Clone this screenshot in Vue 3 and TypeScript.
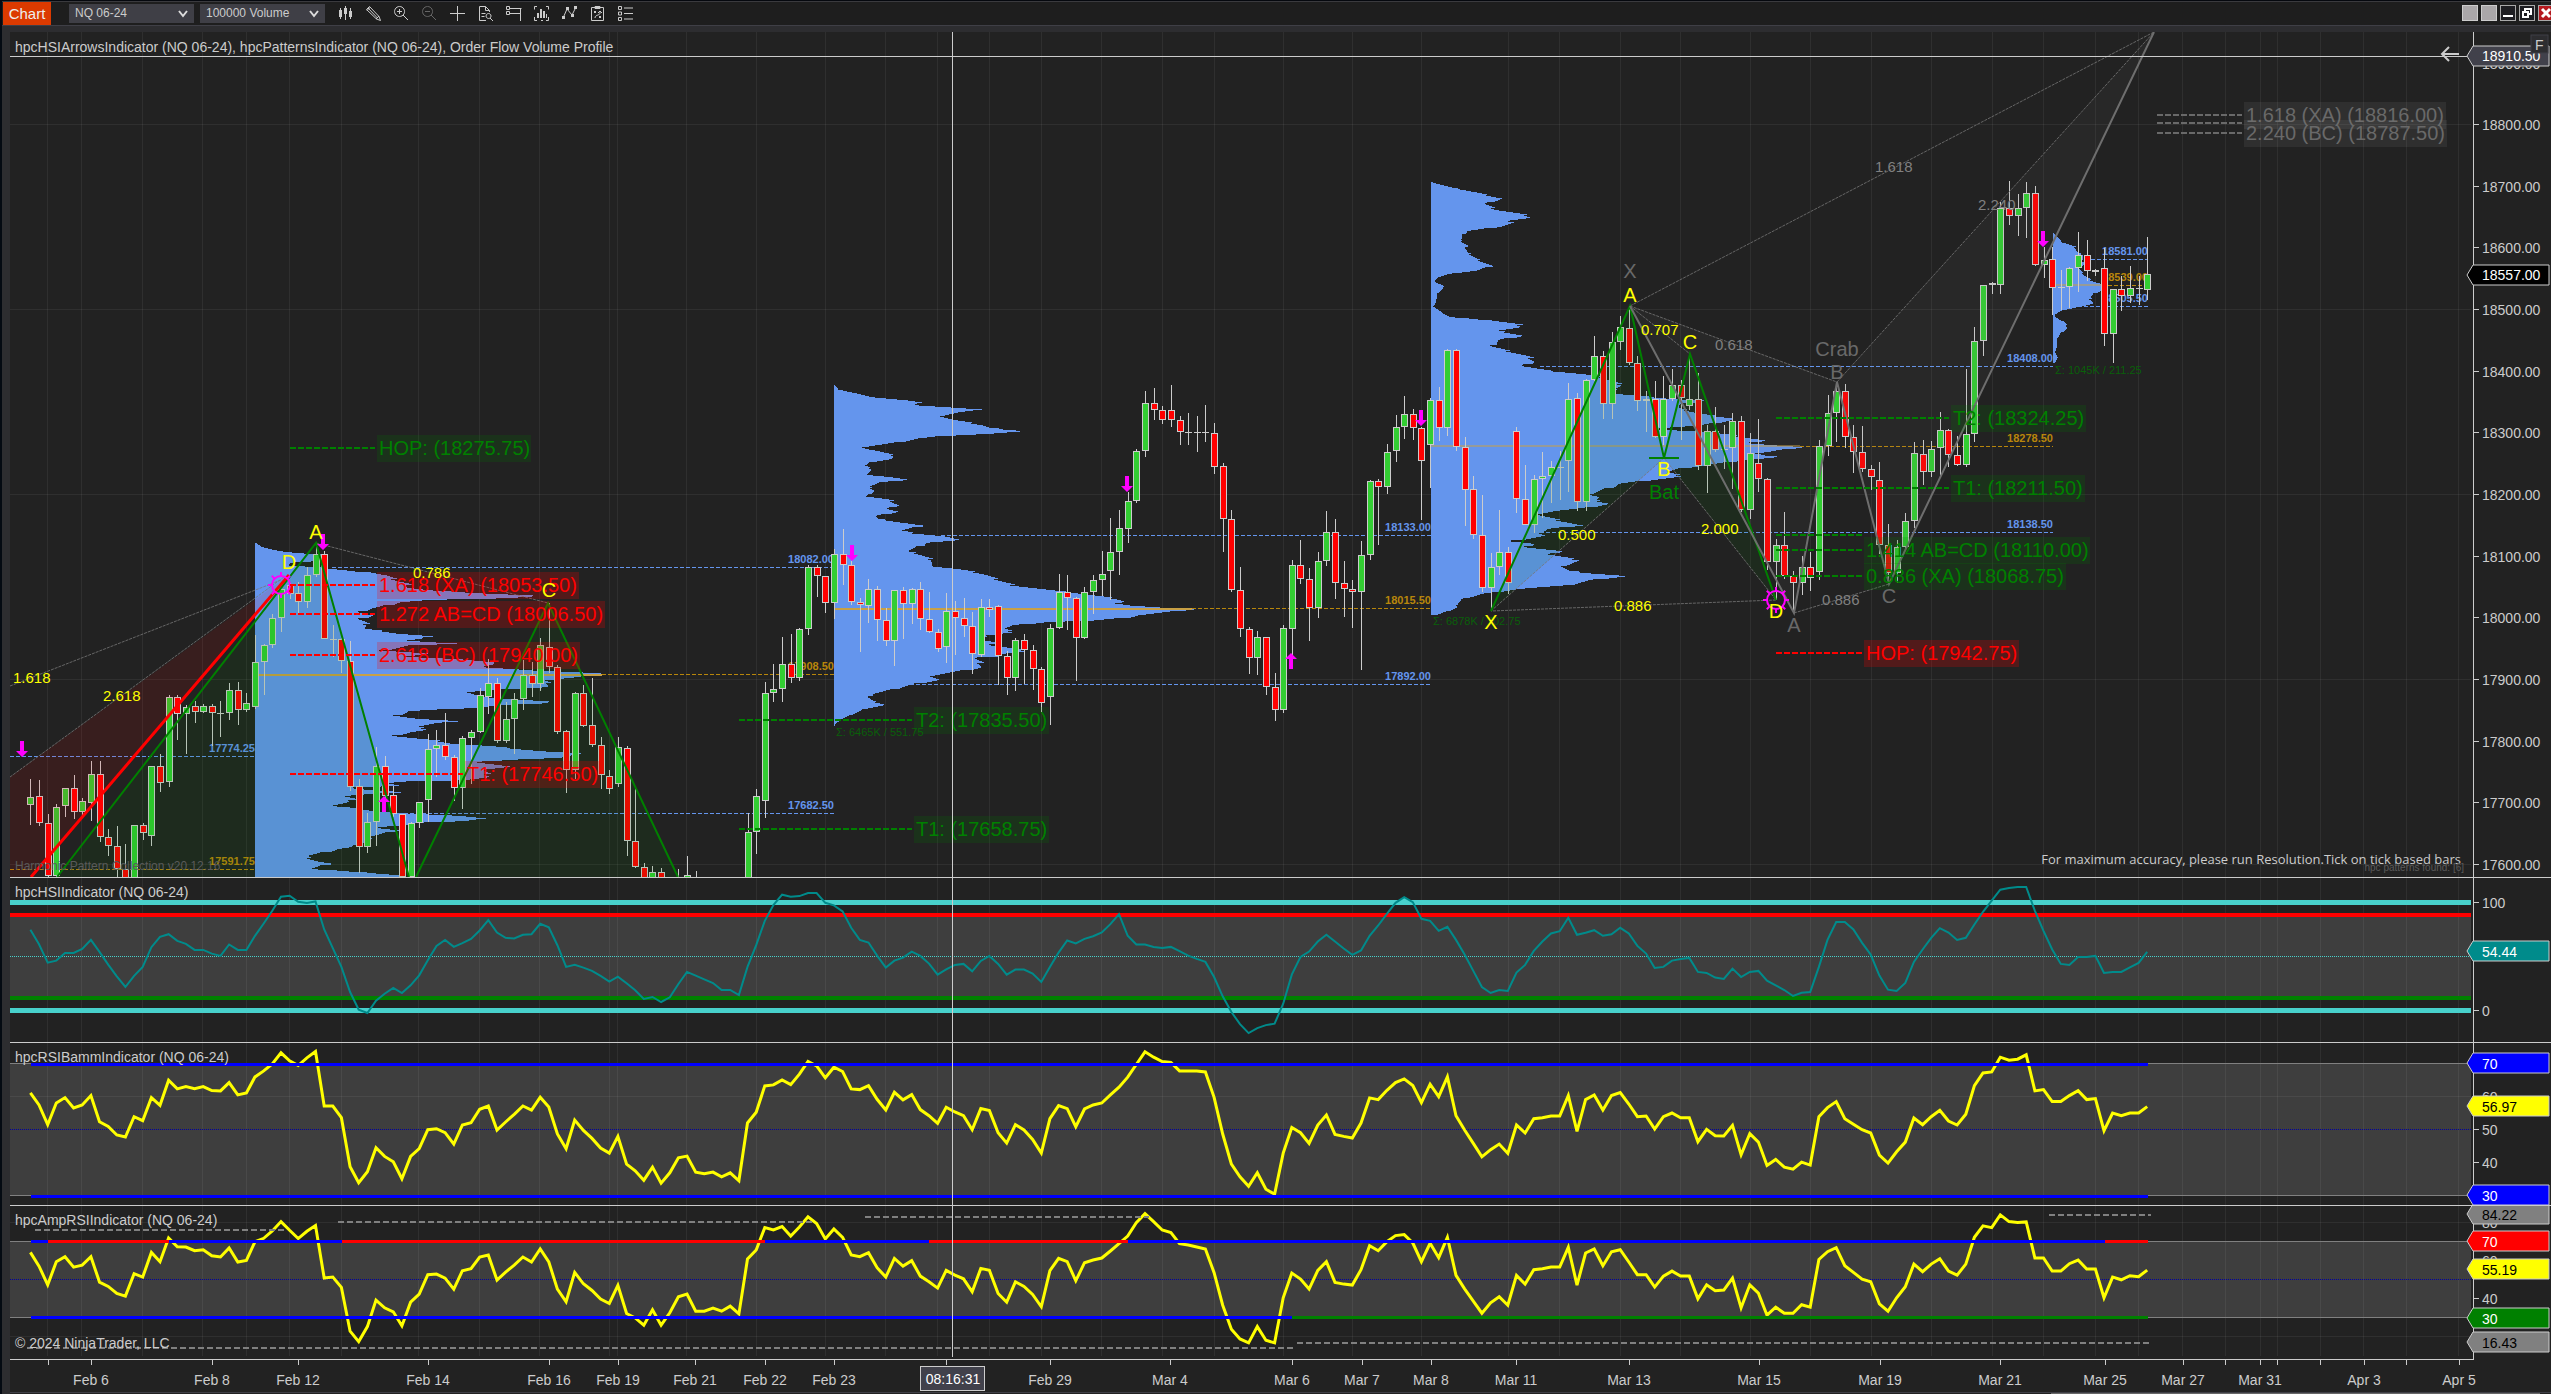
<script setup lang="ts">
type Pt = [number, number]

/* ---------- bar series ---------- */
const FIRST_X = 30.4
const BAR_STEP = 8.64
const barX = (i: number) => FIRST_X + i * BAR_STEP

// Each row: body top, body bottom, high, low (thirds of a unit below the block origin), direction.
const barBlocks: { origin: number; rows: string }[] = [
  {
    origin: 500,
    rows: `892 916 838 974 g,889 970 840 977 r,970 1127 942 1131 r,920 1127 912 1131 g,863 919 863 950 g,863 935 826 956 r,904 935 895 948 g,823 910 784 963 g,823 1012 784 1026 r,1012 1039 988 1068 r,
1039 1107 979 1131 r,1107 1140 1033 1140 r,976 1140 976 1140 g,976 1000 969 1019 r,799 1009 799 1037 g,799 850 763 876 r,592 847 586 860 g,592 643 585 719 r,622 643 616 761 g,619 635 604 668 r,
619 635 613 638 g,619 640 611 739 r,640 640 604 710 g,571 640 549 660 g,571 631 547 674 r,610 631 580 635 g,487 622 405 627 g,436 487 433 585 g,355 436 343 443 g,268 355 262 395 g,
256 283 248 298 r,280 307 247 346 r,226 307 200 325 g,163 226 136 230 g,163 418 152 418 r,416 416 376 472 g,416 484 413 518 r,484 862 424 872 r,859 1042 838 1118 r,967 1040 940 1058 g,
797 967 741 1037 g,797 889 768 893 r,886 943 859 951 r,943 1130 943 1135 r,970 1130 967 1135 g,907 970 907 983 g,748 901 703 966 g,736 748 690 830 g,736 772 640 780 r,772 865 765 902 r`,
  },
  {
    origin: 520,
    rows: `655 805 648 867 g,637 653 630 792 g,526 637 504 640 g,490 532 418 582 g,490 664 474 668 r,598 664 547 668 g,538 598 520 702 g,466 538 420 570 g,466 493 427 530 r,376 493 354 513 g,
382 442 250 459 r,442 637 436 641 r,634 751 630 818 r,520 751 517 777 g,520 619 495 620 r,616 676 474 681 r,676 766 652 807 r,769 808 750 822 r,682 793 651 800 g,685 964 678 1008 r,
964 1042 804 1045 r,1042 1080 1030 1080 r,1056 1080 1038 1080 g,1056 1080 1045 1080 r,1090 1120 1085 1125 r,1080 1120 1047 1125 r,1066 1120 1008 1125 g,1080 1120 1052 1125 r,1090 1120 1085 1125 r,1090 1120 1085 1125 g,
1090 1120 1085 1125 r,1090 1120 1085 1125 g,1090 1120 1085 1125 r,937 1080 880 1080 g,829 937 807 1002 g,520 844 486 894 g,508 520 432 546 g,433 508 351 546 g,433 475 342 488 r,328 475 324 483 g,
142 328 135 345 g,142 169 135 231 r,169 250 168 279 r,103 250 88 297 g`,
  },
  {
    origin: 370,
    rows: `553 586 477 645 r,586 697 573 705 r,697 706 684 846 r,658 709 627 759 g,658 751 648 813 r,751 814 714 828 r,661 814 659 887 g,661 703 650 807 r,658 703 654 762 g,658 748 636 780 r,
748 787 666 789 r,787 838 776 846 r,724 832 668 879 g,724 745 693 855 r,745 769 684 800 r,769 853 726 911 r,712 856 686 860 g,712 721 686 741 r,709 859 706 945 r,859 925 843 975 r,
811 925 804 963 g,811 841 792 943 r,841 898 825 960 r,898 1000 891 1025 r,775 982 762 1065 g,667 775 612 777 g,667 685 615 780 r,685 805 682 933 r,667 805 651 807 g,631 667 615 732 g,
613 631 543 679 g,547 604 444 690 g,475 547 420 615 g,394 478 366 519 g,244 394 237 399 g,100 244 63 261 g,100 121 54 151 r,121 149 108 162 r,121 151 45 170 r,151 187 138 225 r,
187 187 128 225 g,187 187 138 246 g,187 190 105 216 g,190 292 159 312 r,289 448 279 546 r,448 661 420 666 r,661 778 591 801 r,778 865 771 912 r,802 865 784 915 g,802 952 801 975 r,
952 1021 909 1053 r,775 1021 766 1029 g,586 778 571 868 g,586 628 510 642 r,628 715 594 813 r,574 715 546 744 g,487 574 423 588 g,487 640 447 687 r,640 658 573 741 r,658 667 630 774 r,
556 667 514 900 g,334 556 330 570 g,334 352 328 525 r,247 352 223 372 g,172 244 136 276 g`,
  },
  {
    origin: 170,
    rows: `733 772 679 807 g,733 775 718 810 r,775 874 771 1050 r,691 826 684 954 g,691 775 651 813 r,541 775 537 798 g,541 832 537 842 r,832 961 801 1068 r,958 1096 919 1107 r,1096 1255 976 1267 r,
1192 1255 1150 1322 g,1147 1192 1021 1215 g,1147 1240 1131 1272 r,784 988 771 1029 r,988 1066 885 1066 r,928 1066 915 1089 g,919 928 846 1044 g,892 919 873 999 g,892 892 843 990 g,688 874 639 966 g,
685 997 669 1023 r,631 997 628 1023 g,559 631 498 633 g,559 703 544 747 r,517 703 487 747 g,472 517 438 540 g,475 580 412 584 r,580 694 558 723 r,688 694 663 786 g,688 802 633 805 r,
688 802 618 826 g,646 688 597 693 g,646 685 630 811 r,688 709 552 720 g,688 889 610 900 r,784 889 765 969 g,784 841 711 846 r,838 841 765 897 g,754 835 729 958 g,754 1021 738 1026 r,
850 1021 789 1047 g,880 928 747 966 r,928 1177 924 1200 r,1126 1177 1107 1290 g,1126 1219 1026 1227 r`,
  },
  {
    origin: 300,
    rows: `829 850 813 940 r,802 850 768 885 g,802 835 756 873 r,439 817 420 840 g,340 439 285 468 g,274 340 250 427 g,274 412 252 444 r,412 457 375 519 r,457 508 378 517 r,508 532 495 570 r,
541 736 486 762 r,736 820 672 850 r,742 820 720 849 g,664 742 639 750 g,460 664 426 685 g,463 517 420 555 r,448 517 423 531 g,391 445 336 525 g,391 466 387 501 r,466 496 408 498 r,
403 496 207 501 g,124 403 81 426 g`,
  },
  {
    origin: 150,
    rows: `406 574 406 618 g,400 406 397 432 g,175 406 157 432 g,175 199 93 225 r,175 199 132 258 g,130 175 96 264 g,130 346 108 348 r,331 346 291 384 g,328 415 290 495 r,412 415 361 480 g,
355 412 352 474 g,316 355 246 426 g,316 364 270 393 r,361 365 356 378 g,355 553 295 588 r,418 553 417 639 g,418 439 378 483 r,415 439 348 459 g,415 415 378 465 g,373 421 261 450 g`,
  },
]

const bars = barBlocks
  .flatMap(({ origin, rows }) =>
    rows.split(',').map((row) => {
      const [top, bottom, high, low, dir] = row.trim().split(' ')
      const y = (v: string) => Math.round(origin + Number(v) / 3)
      return { top: y(top), bottom: y(bottom), high: y(high), low: y(low), dir }
    }),
  )
  .map((b, i) => ({ ...b, x: Math.round(barX(i)), flat: b.bottom - b.top < 2 }))

/* ---------- oscillators ---------- */
const nums = (s: string) => s.trim().split(/\s+/).map(Number)
const linePoints = (values: number[]) =>
  values.map((v, i) => `${barX(i).toFixed(1)},${(870 + v / 2.992).toFixed(1)}`).join(' ')

const hsi = linePoints(nums(`
179 222 277 271 248 248 236 209 245 283 318 350 317 290 231 200 192 212 221 239 239 250 257 223 239 239 197 160 122 80
77 95 99 94 178 234 290 365 418 428 391 370 353 368 345 315 270 227 209 230 219 206 181 150 187 203 205 194 192 161
171 225 290 284 292 302 317 334 319 339 360 386 380 395 381 341 305 316 327 338 359 359 374 290 225 152 105 74 80 78
69 69 98 106 124 173 209 217 256 292 271 262 244 257 280 313 297 284 281 303 272 257 281 313 298 298 310 335 290 247
211 220 206 198 187 162 132 197 223 223 230 233 230 243 256 266 275 320 378 425 461 488 473 464 460 400 313 260 244 214
194 214 235 254 241 197 166 131 98 81 96 146 152 182 170 209 253 302 350 368 359 362 307 284 242 214 190 183 143 194
188 180 197 192 173 190 227 250 293 290 271 266 263 305 308 322 326 295 320 305 302 331 345 359 377 367 365 290 209 156
156 178 218 253 316 358 362 338 275 238 203 174 187 209 203 163 125 92 59 54 51 51 122 182 238 281 284 260 260 257
308 305 305 291 278 245`))

const rsi = linePoints(nums(`
667 703 762 697 681 712 703 675 753 767 793 799 738 750 681 704 629 655 648 654 648 660 661 636 673 667 619 601 580 547
571 585 562 543 706 706 741 888 936 903 831 857 873 924 857 834 777 774 786 820 763 756 716 706 778 754 731 706 718 680
709 790 834 748 779 803 832 847 797 880 900 928 889 937 906 861 856 904 909 904 918 906 930 757 725 646 643 628 642 611
573 586 622 590 603 655 657 645 686 718 665 688 672 717 735 758 710 724 735 777 714 720 786 817 762 778 806 847 744 705
714 768 715 703 697 673 650 620 582 544 560 573 576 601 601 601 604 680 790 880 918 946 906 955 970 847 770 786 818 763
733 791 797 802 757 682 687 659 636 625 645 696 641 678 619 735 778 818 858 837 820 848 763 787 744 741 736 736 675 782
687 673 718 675 666 700 738 736 775 738 727 741 741 813 776 795 796 764 852 789 814 884 866 889 895 874 883 738 711 693
744 761 777 787 853 877 843 814 742 762 738 719 751 763 731 645 607 604 560 569 566 553 661 657 693 693 675 660 687 684
780 727 735 727 727 708`))

const ampRsi = linePoints(nums(`
1144 1185 1241 1172 1157 1188 1182 1157 1233 1246 1267 1275 1208 1218 1144 1172 1101 1127 1128 1139 1136 1154 1158 1131 1173 1168 1112 1102 1080 1052
1078 1103 1081 1064 1221 1218 1249 1380 1411 1366 1287 1310 1322 1364 1293 1269 1211 1209 1221 1254 1199 1193 1158 1152 1227 1203 1182 1158 1173 1134
1173 1254 1292 1204 1238 1258 1284 1297 1243 1327 1340 1362 1316 1362 1325 1277 1269 1320 1320 1311 1320 1305 1328 1164 1137 1070 1077 1067 1095 1068
1038 1058 1104 1074 1099 1152 1157 1145 1190 1218 1162 1185 1169 1215 1232 1251 1198 1212 1223 1262 1192 1198 1267 1293 1232 1246 1270 1307 1199 1162
1172 1229 1175 1167 1161 1140 1118 1095 1055 1028 1052 1077 1085 1118 1122 1128 1134 1205 1302 1374 1403 1415 1366 1407 1415 1280 1206 1224 1254 1198
1172 1234 1239 1242 1196 1124 1139 1112 1094 1091 1116 1172 1117 1160 1099 1213 1253 1290 1326 1295 1277 1302 1213 1239 1196 1193 1188 1188 1129 1242
1146 1134 1184 1142 1136 1173 1211 1211 1248 1215 1200 1215 1215 1283 1241 1259 1257 1221 1310 1241 1266 1332 1308 1326 1326 1301 1308 1165 1142 1130
1184 1204 1224 1232 1298 1320 1280 1247 1179 1202 1179 1163 1200 1212 1179 1099 1065 1070 1032 1052 1055 1053 1161 1161 1200 1200 1178 1167 1194 1194
1280 1218 1226 1214 1217 1197`))

/* ---------- volume profiles ---------- */
// Alternating extent / level pairs; extents are measured from `ox`, levels from `oy`.
const profileData = [
  {
    x0: 255, ox: 0, oy: 500, sx: 3,
    pts: `770 130 785 138 810 146 855 155 900 158 985 163 940 172 985 180 870 187 860 196 985 200 985 204 1035 210 1060 214 1120 215 1160 225 1190 240 1230 252 1225 262 1290 270 1480 280 1620 286 1500 294 1300 298 1200 305 1160 315 1110 325 1080 335 1115 345 1080 355 1095 365 1105 375 1090 385 1150 392 1195 400 1250 404 1290 408 1270 415 1220 420 1280 425 1380 430 1230 435 1150 450 1300 460 1200 468 1380 476 1450 483 1500 490 1440 500 1560 508 1800 518 1805 522 1740 530 1630 540 1650 550 1640 560 1540 565 1400 575 1420 585 1480 592 1650 604 1660 608 1500 614 1420 622 1320 627 1230 632 1190 645 1250 655 1370 662 1300 670 1250 678 1290 688 1230 695 1180 706 1230 712 1310 720 1360 730 1460 736 1570 747 1620 752 1750 760 1680 772 1520 778 1430 785 1535 800 1450 808 1470 830 1370 840 1240 842 1160 848 1190 855 1050 862 1120 870 1210 875 1100 882 1030 887 1060 895 1050 905 990 915 1070 922 1110 932 1250 940 1380 946 1455 955 1400 962 1240 967 1200 975 1130 982 1190 990 1150 1000 1100 1010 1110 1020 1080 1030 1060 1040 1010 1046 990 1052 960 1058 920 1066 930 1075 950 1082 990 1090 930 1105 960 1108 1100 1115 1140 1120 1205 1125 1210 1134`,
  },
  {
    x0: 834, ox: 800, oy: 370, sx: 2.613,
    pts: `92 46 100 57 145 68 175 78 280 90 320 98 300 104 380 110 476 118 420 125 370 135 400 148 450 158 480 165 490 172 592 182 490 190 380 196 310 204 260 215 190 226 155 232 200 240 250 256 240 265 185 275 170 285 190 298 170 312 240 320 280 328 210 336 180 348 195 360 175 378 235 388 255 405 230 415 255 424 200 436 200 444 260 455 320 466 265 480 295 488 375 497 415 510 330 517 310 530 275 542 310 550 350 570 335 585 420 597 480 610 510 625 560 645 660 660 740 670 830 685 850 694 810 700 930 710 1025 717 960 725 880 735 850 742 770 750 640 755 560 765 530 775 560 786 480 795 480 810 510 816 500 824 560 835 600 842 530 850 510 858 460 862 475 880 470 892 400 905 345 915 365 928 300 940 250 955 190 970 180 980 190 992 225 1003 170 1015 140 1030 110 1045 92 1060 90 1066`,
  },
  {
    x0: 1431, ox: 1400, oy: 170, sx: 3,
    pts: `98 36 150 50 230 66 305 84 255 100 290 118 380 134 395 142 320 150 350 156 290 170 200 182 180 208 200 225 200 245 230 265 275 287 230 300 150 310 110 322 105 335 135 348 110 370 110 390 100 408 125 425 150 440 280 450 360 462 370 470 290 480 330 488 370 496 300 508 275 526 320 540 390 560 400 575 370 587 440 600 540 610 600 618 670 645 640 655 640 670 760 680 850 688 910 690 850 700 830 712 900 730 1010 745 960 755 900 765 740 775 920 784 1000 795 1090 810 1050 818 1130 825 1205 830 1100 845 1050 850 1150 859 1020 870 950 880 850 893 800 905 850 918 760 928 660 940 620 955 570 970 600 980 580 988 630 1000 560 1012 460 1022 410 1030 450 1042 500 1055 540 1065 450 1075 420 1085 440 1095 380 1105 330 1112 400 1120 380 1130 480 1142 450 1152 545 1170 490 1185 500 1200 570 1208 680 1217 580 1228 500 1245 360 1255 250 1270 190 1285 170 1300 175 1310 150 1320 110 1333`,
  },
  {
    x0: 2053, ox: 1940, oy: 150, sx: 3,
    pts: `342 248 355 262 365 275 405 288 410 305 432 314 425 330 440 340 415 350 425 365 435 375 450 388 480 400 505 410 470 425 450 440 460 458 415 470 365 480 345 492 345 500 375 515 383 533 360 550 350 570 350 590 345 605 353 620 345 638`,
  },
]

const profiles = profileData.map(({ x0, ox, oy, sx, pts }) => {
  const n = nums(pts)
  const outline: Pt[] = []
  for (let i = 0; i < n.length; i += 2) outline.push([ox + n[i] / sx, oy + n[i + 1] / 3])
  const end = outline[outline.length - 1][1]
  let k = 0
  let d = `M${x0} ${Math.round(outline[0][1])}`
  for (let y = Math.round(outline[0][1]); y < end; y++) {
    while (k < outline.length - 2 && outline[k + 1][1] < y) k++
    const [ax, ay] = outline[k]
    const [bx, by] = outline[k + 1]
    const t = Math.min(1, Math.max(0, (y - ay) / (by - ay || 1)))
    const x = ax + (bx - ax) * t
    const ragged = (((y * 7919) % 13) / 6 - 1) * Math.min(4, (x - x0) * 0.05)
    d += `H${Math.max(x0 + 1, Math.round(x + ragged))}v1`
  }
  return `${d}H${x0}Z`
})

/* ---------- value area lines ---------- */
const areaLines = [
  { x1: 10, x2: 255, y: 756, c: 'va', t: '17774.25' },
  { x1: 10, x2: 255, y: 869, c: 'poc', t: '17591.75' },
  { x1: 332, x2: 834, y: 567, c: 'va', t: '18082.00' },
  { x1: 602, x2: 834, y: 674, c: 'poc', t: '17908.50' },
  { x1: 410, x2: 834, y: 813, c: 'va', t: '17682.50' },
  { x1: 941, x2: 1431, y: 535, c: 'va', t: '18133.00' },
  { x1: 1192, x2: 1431, y: 608, c: 'poc', t: '18015.50' },
  { x1: 910, x2: 1431, y: 684, c: 'va', t: '17892.00' },
  { x1: 1540, x2: 2053, y: 366, c: 'va', t: '18408.00' },
  { x1: 1800, x2: 2053, y: 446, c: 'poc', t: '18278.50' },
  { x1: 1540, x2: 2053, y: 532, c: 'va', t: '18138.50' },
  { x1: 2085, x2: 2148, y: 259, c: 'va', t: '18581.00' },
  { x1: 2108, x2: 2148, y: 285, c: 'poc', t: '18539.00' },
  { x1: 2078, x2: 2148, y: 306, c: 'va', t: '18505.50' },
]
const pocBars = [
  { x1: 257, x2: 602, y: 675, w: 2 },
  { x1: 834, x2: 1192, y: 609, w: 2 },
  { x1: 1431, x2: 1800, y: 446, w: 1 },
  { x1: 2053, x2: 2108, y: 285, w: 1 },
]
const sums = [
  { x: 836, y: 736, t: 'Σ: 6465K / 551.75' },
  { x: 1433, y: 625, t: 'Σ: 6878K / 702.75' },
  { x: 2055, y: 374, t: 'Σ: 1045K / 211.25' },
]

/* ---------- projected levels ---------- */
const levels = [
  { x1: 290, x2: 375, y: 448, w: 154, c: 'up', t: 'HOP: (18275.75)' },
  { x1: 290, x2: 375, y: 585, w: 202, c: 'down', t: '1.618 (XA) (18053.50)' },
  { x1: 290, x2: 375, y: 614, w: 228, c: 'down', t: '1.272 AB=CD (18006.50)' },
  { x1: 290, x2: 375, y: 655, w: 203, c: 'down', t: '2.618 (BC) (17940.00)' },
  { x1: 290, x2: 463, y: 774, w: 135, c: 'down', t: 'T1: (17746.50)' },
  { x1: 739, x2: 912, y: 720, w: 135, c: 'up', t: 'T2: (17835.50)' },
  { x1: 739, x2: 912, y: 829, w: 135, c: 'up', t: 'T1: (17658.75)' },
  { x1: 1776, x2: 1949, y: 418, w: 135, c: 'up', t: 'T2: (18324.25)' },
  { x1: 1776, x2: 1949, y: 488, w: 134, c: 'up', t: 'T1: (18211.50)' },
  { x1: 1776, x2: 1862, y: 535, w: 0, c: 'up', t: '' },
  { x1: 1776, x2: 1862, y: 550, w: 226, c: 'up', t: '1.414 AB=CD (18110.00)' },
  { x1: 1776, x2: 1862, y: 576, w: 202, c: 'up', t: '0.886 (XA) (18068.75)' },
  { x1: 1776, x2: 1862, y: 653, w: 155, c: 'down', t: 'HOP: (17942.75)' },
  { x1: 2157, x2: 2242, y: 115, w: 202, c: 'idle', t: '1.618 (XA) (18816.00)' },
  { x1: 2157, x2: 2242, y: 123, w: 0, c: 'idle', t: '' },
  { x1: 2157, x2: 2242, y: 133, w: 203, c: 'idle', t: '2.240 (BC) (18787.50)' },
]

/* ---------- pattern labels and markers ---------- */
const points = [
  { x: 316, y: 539, t: 'A', c: 'hot' }, { x: 289, y: 569, t: 'D', c: 'hot' }, { x: 549, y: 597, t: 'C', c: 'hot' },
  { x: 1491, y: 629, t: 'X', c: 'hot' }, { x: 1630, y: 302, t: 'A', c: 'hot' }, { x: 1690, y: 349, t: 'C', c: 'hot' },
  { x: 1664, y: 476, t: 'B', c: 'hot' }, { x: 1776, y: 618, t: 'D', c: 'hot' }, { x: 1664, y: 499, t: 'Bat', c: 'bat' },
  { x: 1630, y: 278, t: 'X', c: 'dim' }, { x: 1794, y: 632, t: 'A', c: 'dim' }, { x: 1837, y: 379, t: 'B', c: 'dim' },
  { x: 1837, y: 356, t: 'Crab', c: 'dim' }, { x: 1889, y: 603, t: 'C', c: 'dim' },
]
const ratios = [
  { x: 13, y: 683, t: '1.618', c: 'hot' }, { x: 103, y: 701, t: '2.618', c: 'hot' }, { x: 413, y: 578, t: '0.786', c: 'hot' },
  { x: 1641, y: 335, t: '0.707', c: 'hot' }, { x: 1558, y: 540, t: '0.500', c: 'hot' }, { x: 1701, y: 534, t: '2.000', c: 'hot' },
  { x: 1614, y: 611, t: '0.886', c: 'hot' }, { x: 1715, y: 350, t: '0.618', c: 'faint' }, { x: 1822, y: 605, t: '0.886', c: 'faint' },
  { x: 1978, y: 210, t: '2.240', c: 'faint' }, { x: 1875, y: 172, t: '1.618', c: 'faint' },
]
const arrows = [
  { x: 22, y: 757, up: false }, { x: 323, y: 550, up: false }, { x: 852, y: 561, up: false }, { x: 1127, y: 492, up: false },
  { x: 1421, y: 426, up: false }, { x: 2043, y: 247, up: false }, { x: 384, y: 796, up: true }, { x: 1291, y: 653, up: true },
]
const arrowPath = (a: { x: number; y: number; up: boolean }) => {
  const s = a.up ? 1 : -1
  return `M${a.x} ${a.y}l6 ${6 * s}h-4v${10 * s}h-4v${-10 * s}h-4z`
}
const suns: Pt[] = [[281, 585], [1776, 600]]
const rays = Array.from({ length: 8 }, (_, i) => {
  const a = (i * Math.PI) / 4
  const c = Math.cos(a)
  const s = Math.sin(a)
  return `M${(c * 9).toFixed(1)} ${(s * 9).toFixed(1)}L${(c * 13).toFixed(1)} ${(s * 13).toFixed(1)}`
}).join('')

/* ---------- axes ---------- */
const gridX = [47, 81, 142, 202, 246, 289, 341, 418, 479, 539, 609, 617, 686, 756, 825, 885, 937, 989, 1041, 1101, 1162, 1214, 1283, 1352, 1421, 1508, 1559, 1620, 1680, 1750, 1810, 1871, 1931, 1992, 2043, 2095, 2138, 2182, 2225, 2260, 2277, 2320, 2363, 2406, 2458]
const grid = (top: number, bottom: number, rows: number[]) =>
  gridX.map((x) => `M${x}.5 ${top}V${bottom}`).join('') + rows.map((y) => `M10 ${y}.5H2471`).join('')

const priceTicks = Array.from({ length: 14 }, (_, i) => ({
  y: Math.round(62.5 + i * 61.65),
  t: `${18900 - i * 100}.00`,
}))
const timeTicks = [48, 2225, 2277, 2320, 2406]
const timeLabels: [number, string][] = [
  [91, 'Feb 6'], [212, 'Feb 8'], [298, 'Feb 12'], [428, 'Feb 14'], [549, 'Feb 16'], [618, 'Feb 19'], [695, 'Feb 21'],
  [765, 'Feb 22'], [834, 'Feb 23'], [1050, 'Feb 29'], [1170, 'Mar 4'], [1292, 'Mar 6'], [1362, 'Mar 7'], [1431, 'Mar 8'],
  [1516, 'Mar 11'], [1629, 'Mar 13'], [1759, 'Mar 15'], [1880, 'Mar 19'], [2000, 'Mar 21'], [2105, 'Mar 25'],
  [2183, 'Mar 27'], [2260, 'Mar 31'], [2364, 'Apr 3'], [2459, 'Apr 5'],
]

interface Tag { y: number; t: string; fill: string; ink: string }
const tagPath = (y: number) => `M2467 ${y}L2473 ${y - 10}H2549V${y + 10}H2473Z`
const priceTags: Tag[] = [
  { y: 56, t: '18910.50', fill: '#41414b', ink: '#fff' },
  { y: 275, t: '18557.00', fill: '#000', ink: '#fff' },
]
const rsiTags: Tag[] = [
  { y: 1063, t: '70', fill: '#00f', ink: '#fff' },
  { y: 1106, t: '56.97', fill: '#ff0', ink: '#000' },
  { y: 1195, t: '30', fill: '#00f', ink: '#fff' },
]
const ampTags: Tag[] = [
  { y: 1214, t: '84.22', fill: '#808080', ink: '#000' },
  { y: 1241, t: '70', fill: '#f00', ink: '#fff' },
  { y: 1269, t: '55.19', fill: '#ff0', ink: '#000' },
  { y: 1318, t: '30', fill: '#008000', ink: '#fff' },
  { y: 1342, t: '16.43', fill: '#808080', ink: '#000' },
]
const ampBands = [
  { x1: 31, x2: 48, y: 1241, c: '#00f' }, { x1: 48, x2: 169, y: 1241, c: '#f00' }, { x1: 169, x2: 342, y: 1241, c: '#00f' },
  { x1: 342, x2: 765, y: 1241, c: '#f00' }, { x1: 765, x2: 929, y: 1241, c: '#00f' }, { x1: 929, x2: 1128, y: 1241, c: '#f00' },
  { x1: 1128, x2: 2105, y: 1241, c: '#00f' }, { x1: 2105, x2: 2148, y: 1241, c: '#f00' },
  { x1: 31, x2: 1292, y: 1317, c: '#00f' }, { x1: 1292, x2: 2148, y: 1317, c: '#008000' },
]
const ampDashes = 'M35 1230H284M338 1222H812M865 1217H1149M2049 1215H2151M27 1348H1295M1297 1343H2151'

/* ---------- toolbar ---------- */
const tools: { name: string; d: string; solid?: string; off?: boolean }[] = [
  { name: 'Chart style', d: 'M3.5 3v11M8.5 1v14M13.5 3v11', solid: 'M2 5h3v7H2zM7 3h3v6H7zM12 6h3v6h-3z' },
  { name: 'Drawing tools', d: 'M1.5 4.500L4.500 1.500L14 11.500L15.500 15.500L11.500 14zM3 3l9.500 10M2 5.500l3.500-3.500M11 14l3-3' },
  { name: 'Zoom in', d: 'M6.5 1.5a5 5 0 1 0 .1 0zM10 10l5 5M4 6.5h5M6.5 4v5' },
  { name: 'Zoom out', d: 'M6.5 1.5a5 5 0 1 0 .1 0zM10 10l5 5M4 6.5h5', off: true },
  { name: 'Cross hair', d: 'M8.5 1v15M1 8.5h15' },
  { name: 'Data box', d: 'M9 15.5H2.5v-14h6l4 4V7M8.500 1.500v4h4M4.500 8.500h4M4.500 11.500h3M11.500 8.500a2.500 2.500 0 1 0 .1 0zM13 13l3 3' },
  { name: 'Chart trader', d: 'M1.500 1.500h3v3h-3zM1.500 6.500h3v3h-3zM5 3.500h11.500M15.500 3.500V16M5 8.500h10.500' },
  { name: 'Data series', d: 'M4 1.500H1.500v3M13 1.500h2.500v3M1.500 12v3.500H4M15.500 12v3.500H13M8 15.500h2', solid: 'M4 8h2v5H4zM7 4h2v9H7zM10 6h2v7h-2zM13 9h1v4h-1z' },
  { name: 'Indicators', d: 'M2.500 12L6 4l5 6 3.500-7', solid: 'M1 11h3v3H1zM5 2h3v3H5zM10 9h3v3h-3zM13 1h3v3h-3z' },
  { name: 'Strategies', d: 'M2.500 2.500h12v13h-12zM6 1.500h5v2H6zM5 6l2 2M7 6L5 8M10 11l2 2M12 11l-2 2M6 13c0-4 6-2 5-6M9 8l2-2 2 2' },
  { name: 'Properties', d: 'M1.500 1.500h3v3h-3zM1.500 7h3v3h-3zM1.500 12.500h3v3h-3zM7 3h9M7 8.500h9M7 14h9' },
]
</script>

<template>
  <main class="window">
    <header class="bar">
      <button class="tab" type="button">Chart</button>
      <label class="pick">
        <select aria-label="Instrument"><option>NQ 06-24</option></select>
        <svg class="chev" viewBox="0 0 10 8" aria-hidden="true"><path d="M1 1l4 5 4-5" /></svg>
      </label>
      <label class="pick">
        <select aria-label="Interval"><option>100000 Volume</option></select>
        <svg class="chev" viewBox="0 0 10 8" aria-hidden="true"><path d="M1 1l4 5 4-5" /></svg>
      </label>
      <nav class="tools" aria-label="Chart tools">
        <button v-for="t in tools" :key="t.name" type="button" class="tool" :class="{ off: t.off }" :aria-label="t.name">
          <svg viewBox="0 0 17 17" aria-hidden="true">
            <path v-if="t.solid" class="solid" :d="t.solid" />
            <path :d="t.d" />
          </svg>
        </button>
      </nav>
      <div class="winctl">
        <button type="button" class="blank" aria-label="Instrument link"></button>
        <button type="button" class="blank" aria-label="Interval link"></button>
        <button type="button" class="dark" aria-label="Minimize">
          <svg viewBox="0 0 14 14" aria-hidden="true"><path d="M2 10h10" stroke-width="2" /></svg>
        </button>
        <button type="button" class="dark" aria-label="Restore">
          <svg viewBox="0 0 14 14" aria-hidden="true"><path d="M5 5V3h6v5H9M3 6h5v5H3z" stroke-width="2" /></svg>
        </button>
        <button type="button" class="close" aria-label="Close">
          <svg viewBox="0 0 14 14" aria-hidden="true"><path d="M3 3l8 8M11 3l-8 8" stroke-width="3" /></svg>
        </button>
      </div>
    </header>

    <section class="panes">
      <!-- price -->
      <svg class="pane" viewBox="10 32 2541 846" role="img" aria-label="Price">
        <path class="grid" :d="grid(32, 877, [124, 309, 494, 679, 864])" />
        <path v-for="(d, i) in profiles" :key="i" class="profile" :d="d" />
        <line v-for="p in pocBars" :key="p.x1" class="pocbar" :x1="p.x1" :x2="p.x2" :y1="p.y" :y2="p.y" :stroke-width="p.w" />
        <g v-for="a in areaLines" :key="a.t" :class="a.c">
          <path :d="`M${a.x1} ${a.y}.5H${a.x2}`" />
          <text class="s11" :x="a.x2" :y="a.y - 4" text-anchor="end">{{ a.t }}</text>
        </g>
        <text v-for="s in sums" :key="s.t" class="s11 sum" :x="s.x" :y="s.y">{{ s.t }}</text>

        <g v-for="b in bars" :key="b.x">
          <path class="wick" :d="`M${b.x}.5 ${b.high}V${b.low}`" />
          <path v-if="b.flat" class="wick" :d="`M${b.x - 3} ${b.top}.5h7`" />
          <rect v-else class="body" :class="b.dir" :x="b.x - 2.5" :y="b.top + 0.5" width="6" :height="b.bottom - b.top - 1" />
        </g>

        <path class="greenfill" d="M57 877L316 543L409 877ZM416 877L548 603L678 877ZM1491 611L1630 306L1664 458ZM1664 458L1690 354L1776 600Z" />
        <path class="redfill" d="M10 777L289 575L31 877H10Z" />
        <path class="greyfill" d="M1630 306L1794 613L1837 382ZM1837 382L1889 584L2154 32Z" />
        <path class="dots" d="M10 686L281 580M10 777L284 577M316 543L548 603M1491 611L1664 458L1776 600ZM1630 306L1690 354M1630 306L2154 32M1630 306L1837 382L2154 32M1794 613L1889 584" />
        <path class="leg green" d="M57 877L316 543L409 877M416 877L548 603L678 877M1491 611L1630 306L1664 458L1690 354L1776 600M1649 458H1679" />
        <path class="leg red" d="M31 877L289 575" />
        <path class="leg grey" d="M1630 306L1794 613L1837 382L1889 584L2154 32" />

        <g v-for="(s, i) in suns" :key="i" class="sun" :transform="`translate(${s[0]} ${s[1]})`">
          <circle r="9" /><path :d="rays" />
        </g>
        <path v-for="a in arrows" :key="a.x" class="arrow" :d="arrowPath(a)" />

        <g v-for="l in levels" :key="l.x1 + '-' + l.y" :class="l.c">
          <path class="lvl" :d="`M${l.x1} ${l.y}H${l.x2}`" />
          <rect v-if="l.w" class="box" :x="l.x2 + 2" :y="l.y - 13" :width="l.w" height="27" />
          <text v-if="l.w" class="s20" :x="l.x2 + 4" :y="l.y + 7">{{ l.t }}</text>
        </g>
        <text v-for="p in points" :key="p.t + p.x" class="s20" :class="p.c" :x="p.x" :y="p.y" text-anchor="middle">{{ p.t }}</text>
        <text v-for="r in ratios" :key="r.t + r.x" class="s15" :class="r.c" :x="r.x" :y="r.y">{{ r.t }}</text>

        <text class="s14" x="15" y="52">hpcHSIArrowsIndicator (NQ 06-24), hpcPatternsIndicator (NQ 06-24), Order Flow Volume Profile</text>
        <text class="s12 mark" x="15" y="870">Harmonic Pattern Collection v20.12.16</text>
        <text class="note" x="2461" y="864" text-anchor="end">For maximum accuracy, please run Resolution.Tick on tick based bars</text>
        <text class="s10 mark" x="2464" y="871" text-anchor="end">hpc patterns found: [6]</text>

        <path class="hair" d="M10 56.5H2467M952.5 32V877" />
        <path class="back" d="M2459 54H2442M2449 47L2442 54L2449 61" />

        <path class="axis" d="M2473.5 32V877M10 877.5H2551" />
        <g v-for="p in priceTicks" :key="p.t">
          <path class="axis" :d="`M2473 ${p.y}.5H2479`" />
          <text class="s14" x="2482" :y="p.y + 6">{{ p.t }}</text>
        </g>
        <g v-for="t in priceTags" :key="t.t">
          <path class="tag" :d="tagPath(t.y)" :fill="t.fill" />
          <text class="s14" x="2482" :y="t.y + 5" :style="{ fill: t.ink }">{{ t.t }}</text>
        </g>
        <rect class="fbox" x="2531" y="35" width="17" height="18" />
        <text class="s14" x="2535" y="50">F</text>
      </svg>

      <!-- HSI -->
      <svg class="pane" viewBox="10 878 2541 165" role="img" aria-label="HSI">
        <rect class="shade" x="10" y="917" width="2461" height="80" />
        <path class="grid" :d="grid(878, 1042, [])" />
        <path class="mid turq" d="M10 956.5H2471" />
        <path class="rail turq" d="M10 902.5H2471M10 1010.500H2471" stroke-width="5" />
        <path class="rail" stroke="#f00" d="M10 915H2471" stroke-width="4" />
        <path class="rail" stroke="#008000" d="M10 998H2471" stroke-width="4" />
        <path class="turqfill" d="M1396 902L1405 897L1413 902Z" />
        <polyline class="teal" :points="hsi" />
        <text class="s14" x="15" y="897">hpcHSIIndicator (NQ 06-24)</text>
        <path class="hair" d="M952.5 878V1042" />
        <path class="axis" d="M2473.5 878V1042M10 1042.5H2551M2473 902.5H2479M2473 1010.500H2479" />
        <text class="s14" x="2482" y="908">100</text>
        <text class="s14" x="2482" y="1016">0</text>
        <path class="tag" :d="tagPath(951)" fill="#008b8b" />
        <text class="s14" x="2482" y="957" style="fill: #fff">54.44</text>
      </svg>

      <!-- RSI -->
      <svg class="pane" viewBox="10 1043 2541 163" role="img" aria-label="RSI">
        <rect class="shade" x="10" y="1064" width="2461" height="132" />
        <path class="grid" :d="grid(1043, 1205, [1096])" />
        <path class="mid navy" d="M10 1129.5H2471" />
        <path class="bound" d="M10 1063.5H2473M10 1195.5H2473" />
        <polyline class="yellow" :points="rsi" />
        <path class="rail" stroke="#00f" stroke-width="3" d="M31 1064.500H2148M31 1196.500H2148" />
        <text class="s14" x="15" y="1062">hpcRSIBammIndicator (NQ 06-24)</text>
        <path class="hair" d="M952.5 1043V1205" />
        <path class="axis" d="M2473.5 1043V1205M10 1205.5H2551M2473 1096.5H2479M2473 1129.5H2479M2473 1162.5H2479" />
        <text class="s14" x="2482" y="1102">60</text>
        <text class="s14" x="2482" y="1135">50</text>
        <text class="s14" x="2482" y="1168">40</text>
        <g v-for="t in rsiTags" :key="t.t">
          <path class="tag" :d="tagPath(t.y)" :fill="t.fill" />
          <text class="s14" x="2482" :y="t.y + 6" :style="{ fill: t.ink }">{{ t.t }}</text>
        </g>
      </svg>

      <!-- Amp RSI -->
      <svg class="pane" viewBox="10 1206 2541 154" role="img" aria-label="Amp RSI">
        <rect class="shade" x="10" y="1242" width="2461" height="76" />
        <path class="grid" :d="grid(1206, 1356, [1222, 1336])" />
        <path class="mid navy" d="M10 1279.5H2471" />
        <path class="bound" d="M10 1241.5H2473M10 1317.5H2473" />
        <polyline class="yellow" :points="ampRsi" />
        <path v-for="b in ampBands" :key="b.x1 + '-' + b.y" class="rail" :stroke="b.c" stroke-width="3" :d="`M${b.x1} ${b.y}.5H${b.x2}`" />
        <path class="ampdash" :d="ampDashes" />
        <text class="s14" x="15" y="1225">hpcAmpRSIIndicator (NQ 06-24)</text>
        <text class="s14" x="15" y="1348">© 2024 NinjaTrader, LLC</text>
        <path class="hair" d="M952.5 1206V1357" />
        <path class="axis" d="M2473.5 1206V1360M10 1359.5H2474M2473 1222.5H2479M2473 1260.5H2479M2473 1298.5H2479" />
        <text class="s14" x="2482" y="1228">80</text>
        <text class="s14" x="2482" y="1266">60</text>
        <text class="s14" x="2482" y="1304">40</text>
        <g v-for="t in ampTags" :key="t.t">
          <path class="tag" :d="tagPath(t.y)" :fill="t.fill" />
          <text class="s14" x="2482" :y="t.y + 6" :style="{ fill: t.ink }">{{ t.t }}</text>
        </g>
      </svg>

      <!-- time axis -->
      <svg class="pane" viewBox="10 1360 2541 34" role="img" aria-label="Time axis">
        <path v-for="x in timeTicks" :key="x" class="axis" :d="`M${x}.5 1360v5`" />
        <g v-for="[x, t] in timeLabels" :key="t">
          <path class="axis" :d="`M${x}.5 1360v5`" />
          <text class="s14" :x="x" y="1385" text-anchor="middle">{{ t }}</text>
        </g>
        <path class="axis" d="M946.5 1360v5" />
        <rect class="stamp" x="920.5" y="1366.5" width="64" height="24" />
        <text class="s14" x="953" y="1384" text-anchor="middle" style="fill: #fff">08:16:31</text>
        <path class="edge" d="M10 1392.5H2551" />
        <path class="scroll" d="M2051 1393.5H2540" />
      </svg>
    </section>
  </main>
</template>

<style>
body {
  margin: 0;
  background: #222;
}
</style>

<style scoped>
.window {
  min-height: 100vh;
  box-sizing: border-box;
  background: #2d2d30;
  border-left: 2px solid #040a12;
  font-family: 'Liberation Sans', Arial, sans-serif;
  color: #ccc;
}
.bar {
  display: flex;
  align-items: center;
  box-sizing: border-box;
  height: 26px;
  padding-left: 1px;
  border-top: 1px solid #05080e;
  border-bottom: 1px solid #3f3f46;
  background: #1e1e1e;
  box-shadow: inset 0 1px #3a3a3e;
  overflow: hidden;
}
button {
  margin: 0;
  padding: 0;
  border: 0;
  background: none;
  color: inherit;
  font: inherit;
}
.tab {
  width: 48px;
  height: 23px;
  background: #dc3a00;
  color: #eee;
  font-size: 15px;
}
.pick {
  position: relative;
  width: 125px;
  height: 19px;
  margin-left: 6px;
}
.tab + .pick {
  margin-left: 18px;
}
.pick select {
  appearance: none;
  display: block;
  width: 100%;
  height: 19px;
  padding: 0 6px;
  border: 0;
  border-radius: 0;
  background: #3f3f46;
  color: #ccc;
  font: 12px/19px 'Liberation Sans', Arial, sans-serif;
}
.chev {
  position: absolute;
  right: 6px;
  top: 6px;
  width: 10px;
  height: 8px;
  fill: none;
  stroke: #ddd;
  stroke-width: 2;
}
.tools {
  display: flex;
  gap: 11px;
  margin-left: 12px;
}
.tool {
  width: 17px;
  height: 17px;
}
.tool svg {
  display: block;
  width: 17px;
  height: 17px;
  fill: none;
  stroke: #ccc;
}
.tool .solid {
  fill: #ccc;
  stroke: none;
}
.tool.off svg {
  stroke: #666;
}
.winctl {
  display: flex;
  gap: 3px;
  margin-left: auto;
  margin-right: -3px;
}
.winctl button {
  width: 16px;
  height: 16px;
  box-sizing: border-box;
  border: 1px solid #a9a9a9;
}
.winctl svg {
  display: block;
  width: 14px;
  height: 14px;
  fill: none;
  stroke: #fff;
}
.winctl .blank {
  background: #aaa7a9;
  border-color: #ccc;
}
.winctl .dark {
  background: #1e1e22;
}
.winctl .close {
  background: #b5191f;
}
.panes {
  margin-top: 6px;
  padding-left: 8px;
}
.pane {
  display: block;
  width: 100%;
  height: auto;
  background: #222;
}
text {
  fill: #ccc;
  white-space: pre;
}
.s10 { font-size: 10px; }
.s11 { font-size: 11px; }
.s12 { font-size: 12px; }
.s14 { font-size: 14px; }
.s15 { font-size: 15px; }
.s20 { font-size: 20px; }
.note {
  font: 13px 'Open Sans', 'Noto Sans', sans-serif;
}
.mark { fill: #5a5a5a; }
.grid { fill: none; stroke: #fff; stroke-opacity: 0.06; }
.profile { fill: #6495ed; shape-rendering: crispEdges; }
.pocbar { stroke: #c8a045; }
.va path, .poc path { fill: none; stroke: #6495ed; stroke-dasharray: 4 2; }
.poc path { stroke: #b8860b; }
.va text, .poc text { font-weight: 700; }
.va text { fill: #6495ed; }
.poc text { fill: #b8860b; }
.sum { fill: #0a5f0a; }
.wick { fill: none; stroke: #ccc; }
.body { stroke: #ccc; }
.body.g { fill: #32cd32; }
.body.r { fill: #f00; }
.greenfill { fill: #008000; fill-opacity: 0.1; }
.redfill { fill: #f00; fill-opacity: 0.1; }
.greyfill { fill: #808080; fill-opacity: 0.07; }
.dots { fill: none; stroke: #777; stroke-dasharray: 3 1; stroke-width: 1; stroke-opacity: 0.8; }
.leg { fill: none; stroke-width: 2; }
.leg.green { stroke: #008000; }
.leg.red { stroke: #f00; stroke-width: 3; }
.leg.grey { stroke: #6e6e6e; }
.sun { fill: none; stroke: #f0f; stroke-width: 2; }
.arrow { fill: #f0f; }
.lvl { fill: none; stroke-width: 2; stroke-dasharray: 6 2; }
.up .lvl { stroke: #008000; }
.down .lvl { stroke: #f00; }
.idle .lvl { stroke: #696969; }
.up .box { fill: #008000; fill-opacity: 0.18; }
.down .box { fill: #f00; fill-opacity: 0.22; }
.idle .box { fill: #808080; fill-opacity: 0.15; }
.up text { fill: #008000; }
.down text { fill: #f00; }
.idle text { fill: #696969; }
.hot { fill: #ff0; }
.bat { fill: #008000; }
.dim { fill: #696969; }
.faint { fill: #808080; }
.hair { fill: none; stroke: #ccc; }
.back { fill: none; stroke: #ccc; stroke-width: 2; }
.axis { fill: none; stroke: #ccc; }
.tag { stroke: #ccc; stroke-width: 1; }
.fbox { fill: #2d2d30; stroke: #3f3f46; }
.shade { fill: #3e3e3e; }
.mid { fill: none; stroke-dasharray: 1 1; }
.navy { stroke: #0000a0; }
.turq { stroke: #48d1cc; }
.turqfill { fill: #48d1cc; }
.rail { fill: none; }
.bound { fill: none; stroke: #808080; }
.teal { fill: none; stroke: #008b8b; stroke-width: 2; }
.yellow { fill: none; stroke: #ff0; stroke-width: 3; }
.ampdash { fill: none; stroke: #808080; stroke-width: 2; stroke-dasharray: 6 3; }
.stamp { fill: #41414b; stroke: #ccc; }
.edge { fill: none; stroke: #3f3f46; }
.scroll { fill: none; stroke: #686868; }
</style>
